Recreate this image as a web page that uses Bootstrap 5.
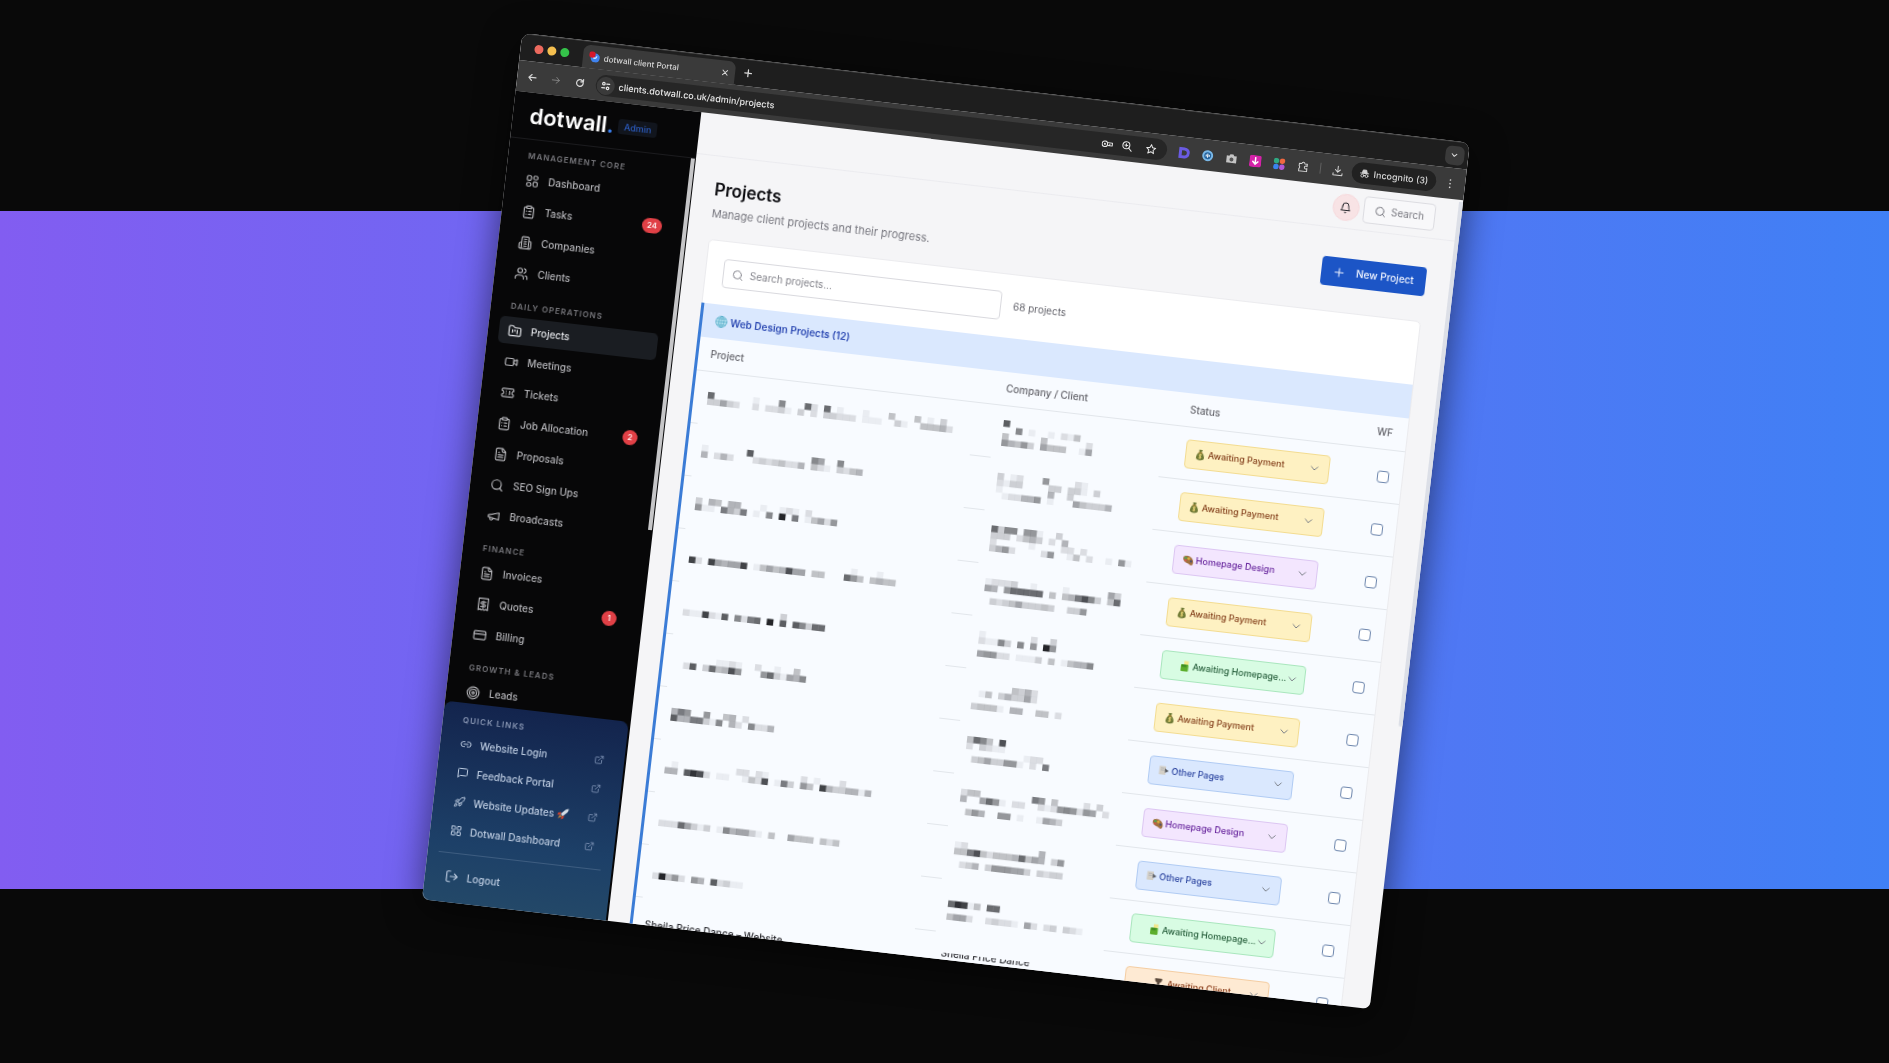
<!DOCTYPE html>
<html lang="en">
<head>
<meta charset="utf-8">
<meta name="viewport" content="width=device-width, initial-scale=1">
<title>dotwall client Portal</title>
<link href="https://cdn.jsdelivr.net/npm/bootstrap@5.3.0/dist/css/bootstrap.min.css" rel="stylesheet">
<style>
  body { font-family: Inter, "Liberation Sans", sans-serif; font-size: 10px; background: #090909; overflow: hidden; }
  a { color: inherit; text-decoration: none; }
  button { font-family: inherit; }
  svg.ico { width: 14px; height: 14px; fill: none; stroke: currentColor; stroke-width: 2; stroke-linecap: round; stroke-linejoin: round; flex: none; display: block; }
  svg.ico-s { width: 12px; height: 12px; }
  svg.ico-xs { width: 10px; height: 10px; }
  svg.ico-8 { width: 8px; height: 8px; stroke-width: 3; }
  svg.bold { stroke-width: 3; }

  .stage { padding: 0 0 21px 3px; background: linear-gradient(90deg, #825df1, #4080f5) 0 211px / 100% 678px no-repeat #090909; }
  .browser { width: 50.5vw; height: 82vh; transform: rotate(6.6deg); border-radius: 9px 9px 7px 7px; overflow: hidden; background: #f5f5f7; }
  .browser-shadow { filter: drop-shadow(0 8px 18px rgba(0,0,0,.55)); }

  /* browser chrome */
  .tabstrip { height: 27px; background: #1e1e1e; padding: 0 4px 0 14px; border-top: 1px solid #484848; color: #d8d8d8; }
  .lights { gap: 4px; }
  .light { width: 9px; height: 9px; border-radius: 50%; background: #ec6a5e; }
  .light-y { background: #f4bf4f; }
  .light-g { background: #35c24a; }
  .browser-tab { width: 153px; height: 23px; margin-left: 14px; background: #3a3a3a; border-radius: 7px 7px 0 0; padding: 0 6px; font-size: 8px; font-weight: 500; gap: 4px; align-self: flex-end; }
  .tab-menu { width: 19px; height: 19px; border-radius: 6px; background: #3a3a3a; border: 0; color: #e0e0e0; }
  .plain-btn { border: 0; background: none; padding: 0; color: inherit; }
  .toolbar { height: 31px; background: #3a3a3a; padding: 0 10px; color: #d5d5d5; }
  .nav-btns { gap: 14px; }
  .omnibox { height: 21px; border-radius: 11px; background: #262626; font-size: 9px; font-weight: 500; color: #e6e6e6; padding: 0 10px 0 1px; margin-left: 11px; }
  .site-info { width: 18px; height: 18px; border-radius: 50%; background: #3a3a3a; }
  .incognito { height: 21px; border-radius: 11px; background: #212121; font-size: 9px; font-weight: 500; padding: 0 8px; gap: 4px; }
  .extensions { gap: 12px; margin-left: 11px; }
  .tool-rule { height: 11px; margin: 0 11px; }
  svg.kebab { margin-left: 9px; stroke-width: 4; }

  /* sidebar */
  .side { width: 187px; background: #070708; color: #b4b4b8; position: relative; }
  .side-head { height: 47px; border-bottom: 1px solid #1b1b1e; padding: 0 17px; gap: 4px; }
  .wordmark { font-size: 22px; line-height: 28px; font-weight: 600; color: #fff; }
  .wordmark span { color: #3b82f6; }
  .role { height: 15px; line-height: 15px; border-radius: 3px; padding: 0 6px; background: #11151d; color: #2c5cc0; font-size: 9px; font-weight: 500; }
  .side-nav { padding: 10px 17px 0 11px; overflow: hidden; min-height: 0; }
  .group-title { font-size: 8px; line-height: 12px; font-weight: 600; letter-spacing: 1px; color: #77777c; margin: 14px 0 5px 9px; text-transform: uppercase; }
  .group-title:first-child { margin-top: 0; }
  .side-link { height: 27px; border-radius: 5px; padding: 0 9px; gap: 9px; margin-bottom: 4px; font-weight: 500; }
  .side-link.active { background: #1a1d22; color: #e2e4e8; }
  .count { min-width: 15px; height: 15px; line-height: 15px; border-radius: 8px; background: #e04046; color: #fff; font-size: 8px; text-align: center; padding: 0 5px; }
  .side-thumb { position: absolute; right: 1px; top: 47px; width: 4px; height: 374px; background: #c6c6c8; }
  .quick { background: linear-gradient(#13244d, #1d4068 70%, #234868); border-radius: 8px 8px 0 0; padding: 11px 11px 10px; color: #bccbe0; flex: none; margin-right: 2px; }
  .quick .group-title { color: #8795b2; }
  .quick .side-link { height: 27px; margin-bottom: 2px; gap: 8px; }
  .quick .ico-xs { color: #7e93b4; }
  .quick hr { margin: 8px 0 10px; border-color: #5b7797; opacity: .5; }
  .with-emoji { gap: 3px; }

  /* main column */
  .main { min-width: 0; position: relative; }
  .main-head { height: 42px; border-bottom: 1px solid #ebebef; padding: 0 26px; gap: 4px; }
  .bell { width: 27px; height: 27px; border-radius: 50%; background: #f8e3e5; border: 1px solid #f5d8db; color: #26262b; padding: 0; }
  .search-btn { height: 27px; border: 1px solid #dcdce1; border-radius: 4px; background: #f8f8fa; color: #77777f; padding: 0 10px; gap: 5px; font-size: 10px; }
  .main-thumb { position: absolute; right: 0; top: 2px; width: 4px; height: 528px; background: #dcdfe7; border-radius: 0 0 2px 2px; }
  .content { padding: 22px 28px 0 22px; }
  .page-title { font-size: 17px; line-height: 22px; font-weight: 600; color: #0b0b0f; margin: 0 0 5px; }
  .page-sub { font-size: 11px; line-height: 16px; color: #77777f; margin: 0; }
  .new-btn { height: 29px; width: 105px; border: 0; border-radius: 4px; background: #1c55c6; color: #f1f5ff; font-size: 10px; font-weight: 500; padding: 0 12px; }
  .panel { margin-top: 18px; border: 1px solid #ebebee; border-radius: 5px 5px 0 0; background: #fff; }
  .panel-tools { padding: 17px; gap: 12px; }
  .finder { width: 280px; height: 29px; border: 1px solid #d9d9de; border-radius: 4px; padding: 0 8px; gap: 6px; color: #85858d; }
  .finder input { border: 0; outline: 0; padding: 0; font-size: 10px; background: none; min-width: 0; color: #333; }
  .finder input::placeholder { color: #808088; opacity: 1; }
  .total { font-size: 10px; color: #63636b; }
  .section { border-left: 3px solid #3b7cd6; margin-left: -1px; background: #f8fbff; }
  .section-title { height: 34px; background: #dae8fe; color: #2f4cb4; font-size: 10px; font-weight: 600; padding: 0 13px; gap: 3px; margin: 0; }
  .grid-table { width: 100%; table-layout: fixed; border-collapse: separate; border-spacing: 0; --line: #e2e6eb; }
  .w-project { width: 42%; }
  .w-company { width: 26%; }
  .w-wf { width: 44px; }
  .grid-table th { height: 34px; padding: 0 12px; font-weight: 500; color: #66666d; border-bottom: 1px solid var(--line); }
  .grid-table td { height: 53px; padding: 0 12px; vertical-align: middle; border: 0; }
  .grid-table td.c-status, .grid-table td.c-wf { border-bottom: 1px solid var(--line); }
  .grid-table th.c-company, .grid-table td.c-company, .grid-table th.c-status, .grid-table td.c-status { padding-left: 10px; }
  .grid-table .c-wf { padding: 0; text-align: center; }
  .grid-table td.c-wf { padding-left: 6px; }
  td.c-project { background: linear-gradient(var(--line), var(--line)) 0 100% / 7px 1px no-repeat, linear-gradient(var(--line), var(--line)) 100% 100% / 18px 1px no-repeat; }
  td.c-company { background: linear-gradient(var(--line), var(--line)) 0 100% / 3px 1px no-repeat, linear-gradient(var(--line), var(--line)) 100% 100% / 14px 1px no-repeat; }
  .mosaic { display: block; fill: #16171c; margin-left: 2px; }
  .client-name { position: relative; line-height: 14px; margin-bottom: 14px; color: #2b2b30; font-weight: 500; }
  .client-name::after { content: ""; position: absolute; inset: 0 0 7px 0; background: #f8fbff; }
  .project-name { color: #2b2b30; font-weight: 500; }
  .status { position: relative; width: 145px; }
  .status svg { position: absolute; top: 8px; left: 9px; width: 12px; height: 12px; }
  .status select { height: 29px; line-height: 14px; padding: 0 0 0 22px; border-radius: 4px; font-size: 9px; font-weight: 500; background-size: 8px 8px; background-position: right 10px center; text-overflow: clip;
    background-image: url("data:image/svg+xml,%3csvg xmlns='http://www.w3.org/2000/svg' viewBox='0 0 16 16'%3e%3cpath fill='none' stroke='%23787d85' stroke-width='2' d='m1 5 7 7 7-7'/%3e%3c/svg%3e"); }
  .st-pay select { background-color: #fef1c2; border-color: #f3dc91; color: #84401c; }
  .st-home select { background-color: #f3e6fe; border-color: #dcc6f2; color: #67259d; }
  .st-wait select { background-color: #d8fce3; border-color: #a9e6bd; color: #255d3a; padding-left: 31px; background-position: right 8px center; }
  .st-wait svg { left: 18px; }
  .st-other select { background-color: #dae8fe; border-color: #b0cbf3; color: #2a439f; }
  .st-client select { background-color: #feead3; border-color: #f4cda2; color: #8b3d1a; padding-left: 42px; }
  .st-client svg { left: 28px; }
  .form-check-input.wf-box { width: 12px; height: 12px; margin: 0; border: 1px solid #6d86ad; background-color: #fff; vertical-align: middle; border-radius: 3px; }
</style>
<script src="https://cdn.jsdelivr.net/npm/bootstrap@5.3.0/dist/js/bootstrap.bundle.min.js"></script>
</head>
<body>
<svg width="0" height="0" class="position-absolute" aria-hidden="true">
  <symbol id="i-dash" viewBox="0 0 24 24"><rect x="3" y="3" width="7" height="8" rx="2"/><rect x="14" y="3" width="7" height="6" rx="2"/><rect x="14" y="13" width="7" height="8" rx="2"/><rect x="3" y="15" width="7" height="6" rx="2"/></symbol>
  <symbol id="i-clip" viewBox="0 0 24 24"><rect x="8" y="2" width="8" height="4" rx="1"/><path d="M16 4h2a2 2 0 0 1 2 2v14a2 2 0 0 1-2 2H6a2 2 0 0 1-2-2V6a2 2 0 0 1 2-2h2M12 11h4M12 16h4M8 11h.01M8 16h.01"/></symbol>
  <symbol id="i-build" viewBox="0 0 24 24"><path d="M6 22V4a2 2 0 0 1 2-2h8a2 2 0 0 1 2 2v18ZM6 12H4a2 2 0 0 0-2 2v6a2 2 0 0 0 2 2h2M18 9h2a2 2 0 0 1 2 2v9a2 2 0 0 1-2 2h-2M10 6h4M10 10h4M10 14h4M10 18h4"/></symbol>
  <symbol id="i-users" viewBox="0 0 24 24"><path d="M16 21v-2a4 4 0 0 0-4-4H6a4 4 0 0 0-4 4v2M22 21v-2a4 4 0 0 0-3-3.87M16 3.13a4 4 0 0 1 0 7.75"/><circle cx="9" cy="7" r="4"/></symbol>
  <symbol id="i-folder" viewBox="0 0 24 24"><path d="M4 20h16a2 2 0 0 0 2-2V8a2 2 0 0 0-2-2h-7.93a2 2 0 0 1-1.66-.9l-.82-1.2A2 2 0 0 0 7.93 3H4a2 2 0 0 0-2 2v13c0 1.100.9 2 2 2ZM8 10v4M12 10v2M16 10v6"/></symbol>
  <symbol id="i-video" viewBox="0 0 24 24"><path d="m16 13 5.200 3.500a.5.5 0 0 0 .8-.4V7.900a.5.5 0 0 0-.8-.4L16 10.500"/><rect x="2" y="6" width="14" height="12" rx="2"/></symbol>
  <symbol id="i-ticket" viewBox="0 0 24 24"><path d="M2 9a3 3 0 0 1 0 6v2a2 2 0 0 0 2 2h16a2 2 0 0 0 2-2v-2a3 3 0 0 1 0-6V7a2 2 0 0 0-2-2H4a2 2 0 0 0-2 2ZM9 9v.01M9 12h.01M9 15v.01M15 9v6"/></symbol>
  <symbol id="i-file" viewBox="0 0 24 24"><path d="M15 2H6a2 2 0 0 0-2 2v16a2 2 0 0 0 2 2h12a2 2 0 0 0 2-2V7ZM14 2v4a2 2 0 0 0 2 2h4M10 9H8M16 13H8M16 17H8"/></symbol>
  <symbol id="i-search" viewBox="0 0 24 24"><circle cx="11" cy="11" r="8"/><path d="m21 21-4.300-4.300"/></symbol>
  <symbol id="i-mega" viewBox="0 0 24 24"><path d="m3 11 18-5v12L3 14v-3ZM11.600 16.800a3 3 0 1 1-5.800-1.600"/></symbol>
  <symbol id="i-quote" viewBox="0 0 24 24"><path d="M4 2h16v20l-3-2-3 2-2-2-3 2-2-2-3 2ZM16 8h-6a2 2 0 1 0 0 4h4a2 2 0 1 1 0 4H8M12 17.500v-11"/></symbol>
  <symbol id="i-card" viewBox="0 0 24 24"><rect x="2" y="5" width="20" height="14" rx="2"/><path d="M2 10h20"/></symbol>
  <symbol id="i-target" viewBox="0 0 24 24"><circle cx="12" cy="12" r="10"/><circle cx="12" cy="12" r="6"/><circle cx="12" cy="12" r="2"/></symbol>
  <symbol id="i-link" viewBox="0 0 24 24"><path d="M9 17H7A5 5 0 0 1 7 7h2M15 7h2a5 5 0 1 1 0 10h-2M8 12h8"/></symbol>
  <symbol id="i-msg" viewBox="0 0 24 24"><path d="M21 15a2 2 0 0 1-2 2H7l-4 4V5a2 2 0 0 1 2-2h14a2 2 0 0 1 2 2Z"/></symbol>
  <symbol id="i-rocket" viewBox="0 0 24 24"><path d="M4.500 16.500c-1.500 1.260-2 5-2 5s3.740-.5 5-2c.710-.84.7-2.130-.09-2.910a2.180 2.180 0 0 0-2.910-.09ZM12 15l-3-3a22 22 0 0 1 2-3.950A12.880 12.880 0 0 1 22 2c0 2.720-.78 7.500-6 11a22.350 22.350 0 0 1-4 2ZM9 12H4s.55-3.030 2-4c1.620-1.080 5 0 5 0M12 15v5s3.030-.55 4-2c1.080-1.620 0-5 0-5"/></symbol>
  <symbol id="i-grid" viewBox="0 0 24 24"><rect x="3" y="3" width="7" height="7" rx="1"/><rect x="14" y="3" width="7" height="7" rx="1"/><rect x="14" y="14" width="7" height="7" rx="1"/><rect x="3" y="14" width="7" height="7" rx="1"/></symbol>
  <symbol id="i-ext" viewBox="0 0 24 24"><path d="M15 3h6v6M10 14 21 3M18 13v6a2 2 0 0 1-2 2H5a2 2 0 0 1-2-2V8a2 2 0 0 1 2-2h6"/></symbol>
  <symbol id="i-out" viewBox="0 0 24 24"><path d="M9 21H5a2 2 0 0 1-2-2V5a2 2 0 0 1 2-2h4M16 17l5-5-5-5M21 12H9"/></symbol>
  <symbol id="i-plus" viewBox="0 0 24 24"><path d="M4 12h16M12 4v16"/></symbol>
  <symbol id="i-x" viewBox="0 0 24 24"><path d="m5 5 14 14M19 5 5 19"/></symbol>
  <symbol id="i-back" viewBox="0 0 24 24"><path d="M21 12H4M11 5l-7 7 7 7"/></symbol>
  <symbol id="i-fwd" viewBox="0 0 24 24"><path d="M3 12h17M13 5l7 7-7 7"/></symbol>
  <symbol id="i-reload" viewBox="0 0 24 24"><path d="M20 12a8 8 0 1 1-3-6.200L20 9M20 3v6h-6"/></symbol>
  <symbol id="i-tune" viewBox="0 0 24 24"><circle cx="7" cy="7" r="3"/><path d="M14 7h7M3 17h7"/><circle cx="17" cy="17" r="3"/></symbol>
  <symbol id="i-key" viewBox="0 0 24 24"><circle cx="7" cy="12" r="5.500"/><circle cx="7" cy="12" r="1"/><path d="M13 9h9v6h-9M17 15v-3"/></symbol>
  <symbol id="i-zoom" viewBox="0 0 24 24"><circle cx="10" cy="10" r="7"/><path d="m21 21-6-6M7 10h6M10 7v6"/></symbol>
  <symbol id="i-star" viewBox="0 0 24 24"><path d="m12 3 2.800 6 6.200.6-4.700 4.300 1.400 6.600L12 17.200l-5.700 3.300 1.400-6.600L3 9.600 9.200 9Z"/></symbol>
  <symbol id="i-puzzle" viewBox="0 0 24 24"><path d="M4 6h5a3 3 0 1 1 6 0h5v5a3 3 0 1 0 0 4v6H4v-5a3 3 0 0 0 0-5Z"/></symbol>
  <symbol id="i-down" viewBox="0 0 24 24"><path d="M12 3v12M7 10l5 5 5-5M3 17v4h18v-4"/></symbol>
  <symbol id="i-spy" viewBox="0 0 24 24"><path d="M6 10 8 3h8l2 7Z" fill="currentColor"/><path d="M2 11h20"/><circle cx="7" cy="17" r="3.500"/><circle cx="17" cy="17" r="3.500"/><path d="M10.500 16h3"/></symbol>
  <symbol id="i-bell" viewBox="0 0 24 24"><path d="M6 8a6 6 0 0 1 12 0c0 7 3 9 3 9H3s3-2 3-9M10.300 21a1.940 1.940 0 0 0 3.400 0"/></symbol>
  <symbol id="i-chev" viewBox="0 0 24 24"><path d="m5 9 7 7 7-7"/></symbol>

  <symbol id="e-pay" viewBox="0 0 24 24"><path fill="#6f7a35" d="M9 2h7l-2 5c4 2 6 8 6 11 0 3-2 5-8 5s-8-2-8-5c0-3 2-9 6-11Z"/><path fill="#b98c3a" d="M8 7h8v2H8Z"/><path stroke="#efd879" stroke-width="2" fill="none" d="M15 12c-5-2-6 2-3 3s2 4-3 3M12 10v10"/></symbol>
  <symbol id="e-home" viewBox="0 0 24 24"><path fill="#a0703f" d="M2 8c1-5 9-6 15-2s7 12 4 15-5-1-8-2S1 15 2 8Z"/><circle cx="7" cy="8" r="2.500" fill="#54a552"/><circle cx="13" cy="9" r="2.500" fill="#e2b63b"/><circle cx="7" cy="13" r="2" fill="#d8554f"/><circle cx="18" cy="14" r="2" fill="#3d4a77"/></symbol>
  <symbol id="e-wait" viewBox="0 0 24 24"><path fill="#f2e68b" d="M10 1h9v8h-9Z"/><rect x="4" y="8" width="15" height="14" rx="2" fill="#5cae2c"/><path fill="#3d8623" d="M6 9h9v4H6Z"/></symbol>
  <symbol id="e-other" viewBox="0 0 24 24"><path fill="#d3cfc6" d="M3 3h13v17H3Z"/><path fill="#b4b5b8" d="M6 6h7v2H6Zm0 4h7v2H6Z"/><path fill="#55585f" d="m14 7 8 5-7 4Z"/></symbol>
  <symbol id="e-client" viewBox="0 0 24 24"><path fill="#5c4a3c" d="M5 2h14v3c0 4-5 5-5 7s5 3 5 7v3H5v-3c0-4 5-5 5-7S5 9 5 5Z"/></symbol>
</svg>

<main class="stage min-vh-100 d-flex align-items-center justify-content-center">
 <div class="browser-shadow">
  <div class="browser d-flex flex-column">

    <div class="tabstrip d-flex align-items-center flex-shrink-0">
      <div class="lights d-flex"><span class="light"></span><span class="light light-y"></span><span class="light light-g"></span></div>
      <div class="browser-tab d-flex align-items-center">
        <svg width="11" height="11" viewBox="0 0 24 24" aria-hidden="true"><circle cx="14" cy="14" r="10" fill="#3f83ef"/><path d="M9 12c3 5 7 3 8-2" stroke="#cfe2ff" stroke-width="3" fill="none"/><circle cx="7" cy="7" r="7" fill="#d5182c"/></svg>
        <span class="flex-grow-1">dotwall client Portal</span>
        <button class="plain-btn" aria-label="Close tab"><svg class="ico ico-8"><use href="#i-x"/></svg></button>
      </div>
      <button class="plain-btn ms-2" aria-label="New tab"><svg class="ico ico-xs bold"><use href="#i-plus"/></svg></button>
      <button class="tab-menu ms-auto d-flex align-items-center justify-content-center p-0" aria-label="Search tabs"><svg class="ico ico-8"><use href="#i-chev"/></svg></button>
    </div>

    <div class="toolbar d-flex align-items-center flex-shrink-0">
      <div class="nav-btns d-flex">
        <button class="plain-btn" aria-label="Back"><svg class="ico ico-xs bold"><use href="#i-back"/></svg></button>
        <button class="plain-btn opacity-50" aria-label="Forward"><svg class="ico ico-xs"><use href="#i-fwd"/></svg></button>
        <button class="plain-btn" aria-label="Reload"><svg class="ico ico-xs bold"><use href="#i-reload"/></svg></button>
      </div>
      <div class="omnibox d-flex align-items-center flex-grow-1">
        <span class="site-info d-flex align-items-center justify-content-center"><svg class="ico ico-xs bold"><use href="#i-tune"/></svg></span>
        <span class="ms-1 flex-grow-1">clients.dotwall.co.uk/admin/projects</span>
        <span class="d-flex gap-2 align-items-center">
          <svg class="ico ico-s"><use href="#i-key"/></svg><svg class="ico ico-s"><use href="#i-zoom"/></svg><svg class="ico ico-s ms-1"><use href="#i-star"/></svg>
        </span>
      </div>
      <div class="extensions d-flex align-items-center">
        <svg width="12" height="12" viewBox="0 0 24 24"><path d="M5 4h8a8 8 0 0 1 0 16H5Z" fill="none" stroke="#6a5be2" stroke-width="6"/></svg>
        <svg width="12" height="12" viewBox="0 0 24 24"><circle cx="12" cy="12" r="11" fill="#79b7e6"/><circle cx="12" cy="12" r="7" fill="#25639d"/><path d="M12 8v8M9 10v4M15 10v4" stroke="#fff" stroke-width="2"/></svg>
        <svg width="12" height="12" viewBox="0 0 24 24"><path d="M2 7h5l2-3h6l2 3h5v14H2Z" fill="#c4c4c4"/><circle cx="12" cy="14" r="4" fill="#555"/></svg>
        <svg width="12" height="12" viewBox="0 0 24 24"><rect width="24" height="24" rx="4" fill="#d422a8"/><path d="M12 4v14M6 12l6 6 6-6" stroke="#fff" stroke-width="3" fill="none"/></svg>
        <svg width="12" height="12" viewBox="0 0 24 24"><circle cx="6" cy="6" r="5.500" fill="#2fa982"/><circle cx="18" cy="6" r="5.500" fill="#ef6840"/><circle cx="6" cy="18" r="5.500" fill="#3a83ee"/><circle cx="18" cy="18" r="5.500" fill="#b056d6"/></svg>
        <svg class="ico ico-s"><use href="#i-puzzle"/></svg>
      </div>
      <span class="tool-rule vr align-self-center"></span>
      <svg class="ico ico-s"><use href="#i-down"/></svg>
      <div class="incognito d-flex align-items-center ms-2"><svg class="ico ico-xs"><use href="#i-spy"/></svg>Incognito (3)</div>
      <svg class="ico ico-xs kebab" viewBox="0 0 24 24"><path d="M12 3v.01M12 12v.01M12 21v.01"/></svg>
    </div>

    <div class="d-flex flex-grow-1 overflow-hidden">
      <aside class="side d-flex flex-column flex-shrink-0">
        <div class="side-head d-flex align-items-center flex-shrink-0">
          <a href="#" class="wordmark">dotwall<span>.</span></a><span class="role">Admin</span>
        </div>
        <nav class="side-nav flex-grow-1" aria-label="Sections">
          <div class="group-title">Management core</div>
          <a href="#" class="side-link d-flex align-items-center"><svg class="ico"><use href="#i-dash"/></svg>Dashboard</a>
          <a href="#" class="side-link d-flex align-items-center"><svg class="ico"><use href="#i-clip"/></svg>Tasks<span class="count ms-auto">24</span></a>
          <a href="#" class="side-link d-flex align-items-center"><svg class="ico"><use href="#i-build"/></svg>Companies</a>
          <a href="#" class="side-link d-flex align-items-center"><svg class="ico"><use href="#i-users"/></svg>Clients</a>
          <div class="group-title">Daily operations</div>
          <a href="#" class="side-link active d-flex align-items-center" aria-current="page"><svg class="ico"><use href="#i-folder"/></svg>Projects</a>
          <a href="#" class="side-link d-flex align-items-center"><svg class="ico"><use href="#i-video"/></svg>Meetings</a>
          <a href="#" class="side-link d-flex align-items-center"><svg class="ico"><use href="#i-ticket"/></svg>Tickets</a>
          <a href="#" class="side-link d-flex align-items-center"><svg class="ico"><use href="#i-clip"/></svg>Job Allocation<span class="count ms-auto">2</span></a>
          <a href="#" class="side-link d-flex align-items-center"><svg class="ico"><use href="#i-file"/></svg>Proposals</a>
          <a href="#" class="side-link d-flex align-items-center"><svg class="ico"><use href="#i-search"/></svg>SEO Sign Ups</a>
          <a href="#" class="side-link d-flex align-items-center"><svg class="ico"><use href="#i-mega"/></svg>Broadcasts</a>
          <div class="group-title">Finance</div>
          <a href="#" class="side-link d-flex align-items-center"><svg class="ico"><use href="#i-file"/></svg>Invoices</a>
          <a href="#" class="side-link d-flex align-items-center"><svg class="ico"><use href="#i-quote"/></svg>Quotes<span class="count ms-auto">1</span></a>
          <a href="#" class="side-link d-flex align-items-center"><svg class="ico"><use href="#i-card"/></svg>Billing</a>
          <div class="group-title">Growth &amp; leads</div>
          <a href="#" class="side-link d-flex align-items-center"><svg class="ico"><use href="#i-target"/></svg>Leads</a>
        </nav>
        <div class="side-thumb"></div>
        <nav class="quick" aria-label="Quick links">
          <div class="group-title">Quick links</div>
          <a href="#" class="side-link d-flex align-items-center"><svg class="ico ico-s"><use href="#i-link"/></svg>Website Login<svg class="ico ico-xs ms-auto"><use href="#i-ext"/></svg></a>
          <a href="#" class="side-link d-flex align-items-center"><svg class="ico ico-s"><use href="#i-msg"/></svg>Feedback Portal<svg class="ico ico-xs ms-auto"><use href="#i-ext"/></svg></a>
          <a href="#" class="side-link d-flex align-items-center"><svg class="ico ico-s"><use href="#i-rocket"/></svg><span class="with-emoji d-flex align-items-center">Website Updates
            <svg width="12" height="12" viewBox="0 0 24 24"><path d="M8 12 17 3c3-2 5-2 6-2 0 2 0 4-2 7l-9 9Z" fill="#d4dbe4"/><path d="M9 9 3 10l-2 5 6-1ZM15 15l-1 6-5 2 1-6Z" fill="#d1452f"/><path d="m7 14 3 3-7 5Z" fill="#ef9a35"/></svg></span><svg class="ico ico-xs ms-auto"><use href="#i-ext"/></svg></a>
          <a href="#" class="side-link d-flex align-items-center"><svg class="ico ico-s"><use href="#i-grid"/></svg>Dotwall Dashboard<svg class="ico ico-xs ms-auto"><use href="#i-ext"/></svg></a>
          <hr>
          <a href="#" class="side-link d-flex align-items-center"><svg class="ico"><use href="#i-out"/></svg>Logout</a>
        </nav>
      </aside>

      <section class="main flex-grow-1">
        <div class="main-thumb"></div>
        <header class="main-head d-flex align-items-center justify-content-end">
          <button class="bell d-flex align-items-center justify-content-center" aria-label="Notifications"><svg class="ico ico-s"><use href="#i-bell"/></svg></button>
          <button class="search-btn d-flex align-items-center"><svg class="ico ico-s"><use href="#i-search"/></svg>Search</button>
        </header>
        <div class="content">
          <div class="d-flex align-items-center justify-content-between">
            <div>
              <h1 class="page-title">Projects</h1>
              <p class="page-sub">Manage client projects and their progress.</p>
            </div>
            <button class="new-btn d-flex align-items-center justify-content-between"><svg class="ico ico-s"><use href="#i-plus"/></svg>New Project</button>
          </div>
          <div class="panel">
            <div class="panel-tools d-flex align-items-center">
              <label class="finder d-flex align-items-center"><svg class="ico ico-s"><use href="#i-search"/></svg><input type="text" class="flex-grow-1" placeholder="Search projects..." aria-label="Search projects"></label>
              <span class="total">68 projects</span>
            </div>
            <div class="section">
              <h2 class="section-title d-flex align-items-center"><svg class="ico ico-s" viewBox="0 0 24 24"><g stroke="#57aecb" stroke-width="1.5"><circle cx="12" cy="12" r="11" fill="#bfe6f2"/><ellipse cx="12" cy="12" rx="5" ry="11"/><path d="M1 12h22M3 6h18M3 18h18M12 1v22"/></g></svg>Web Design Projects (12)</h2>
              <table class="grid-table">
                <colgroup><col class="w-project"><col class="w-company"><col><col class="w-wf"></colgroup>
                <thead><tr><th>Project</th><th class="c-company">Company / Client</th><th class="c-status">Status</th><th class="c-wf">WF</th></tr></thead>
                <tbody id="rows"></tbody>
              </table>
            </div>
          </div>
        </div>
      </section>
    </div>
  </div>
 </div>
</main>

<script>
  // Obscured cells: one string per line of blocks, one hex digit per block for its darkness.
  const rows = [
    ["pay", ["a......1...8...a2.a.1...1...4...4.1.3.", "33632..2.2231.3.2.33222.111..31..44452"],
            ["b", "..8.1..1.214", "4.....4......2", "75473.6444..16"]],
    ["pay", ["1......b.........86..8", "5.252...23234225.421.3245"],
            ["3.12...7....21", "2133....33.331.3", "1.......5..3", ".122557.1...643335"]],
    ["home", ["3.54.55...1..121.2", "711.9539.1.8.f.9.14627"],
            ["a388.771..3", "333.2453.2.5", "2.....1....22.2", "3572....27..14.2..1.71"]],
    ["pay", [".........................1...1", "d2.d6566d.14645c66.44...a74.4544"],
            ["12223..1....1......63", "65.7aaaaa.4.459c83.4a", "", ".3234633343..337"]],
    ["wait", ["...............3", "211d21b.829a.f.b.b83aa"],
            ["1.......2..3", "21183.8.7.f7", "", "67722.1113.4.14558"]],
    ["pay", ["......1121..2..1..4", ".2b.3a45c7...7a31658"],
            ["......4352", ".14.353362", "", "34441.55..44.2"]],
    ["other", ["597..7..45.2", "b5599318.52.8225"],
            ["4a84.c", "2.3211", ".........122", ".34633771.2.9"]],
    ["home", [".1.........22.21.....2.1...2", "55.bec2.11..142c.193.74.d5335515"],
            ["244........97.4....2.3", "5..6a71.22..212787276.2", "", ".475..77.1..1653"]],
    ["other", ["", "222a6313.1856631.4..6444.424"],
            ["12...........5", "449c424445a465.37", "", ".235.3777663.3233"]],
    ["wait", ["", "2f472.75.b2311"],
            ["", "aed14.aa", "", "4662..23221.62.23.321"]],
    ["client", "Sheila Price Dance – Website", "Sheila Price Dance"]
  ];
  const labels = { pay: "Awaiting Payment", home: "Homepage Design", wait: "Awaiting Homepage...", other: "Other Pages", client: "Awaiting Client" };
  const block = 6.57;

  function mosaic(lines) {
    const cols = Math.max(...lines.map(l => l.length));
    let out = "";
    lines.forEach((line, y) => [...line].forEach((c, x) => {
      if (c !== ".") out += `<rect x="${x}" y="${y}" width="1.02" height="1.02" fill-opacity="${(parseInt(c, 16) / 16).toFixed(2)}"/>`;
    }));
    return `<svg class="mosaic" aria-hidden="true" width="${Math.round(cols * block)}" height="${Math.round(lines.length * block)}" viewBox="0 0 ${cols} ${lines.length}" preserveAspectRatio="xMinYMid">${out}</svg>`;
  }

  document.getElementById("rows").innerHTML = rows.map(([kind, project, company], i) => `
    <tr>
      <td class="c-project">${Array.isArray(project) ? mosaic(project) : `<span class="project-name">${project}</span>`}</td>
      <td class="c-company">${Array.isArray(company) ? mosaic(company) : `<div class="client-name">${company}</div>`}</td>
      <td class="c-status"><div class="status st-${kind}">
        <select class="form-select" aria-label="Status of project ${i + 1}">${Object.keys(labels).map(k => `<option${k === kind ? " selected" : ""}>${labels[k]}</option>`).join("")}</select>
        <svg aria-hidden="true"><use href="#e-${kind}"/></svg></div></td>
      <td class="c-wf"><input type="checkbox" class="form-check-input wf-box" aria-label="WF for project ${i + 1}"></td>
    </tr>`).join("");
</script>
</body>
</html>
